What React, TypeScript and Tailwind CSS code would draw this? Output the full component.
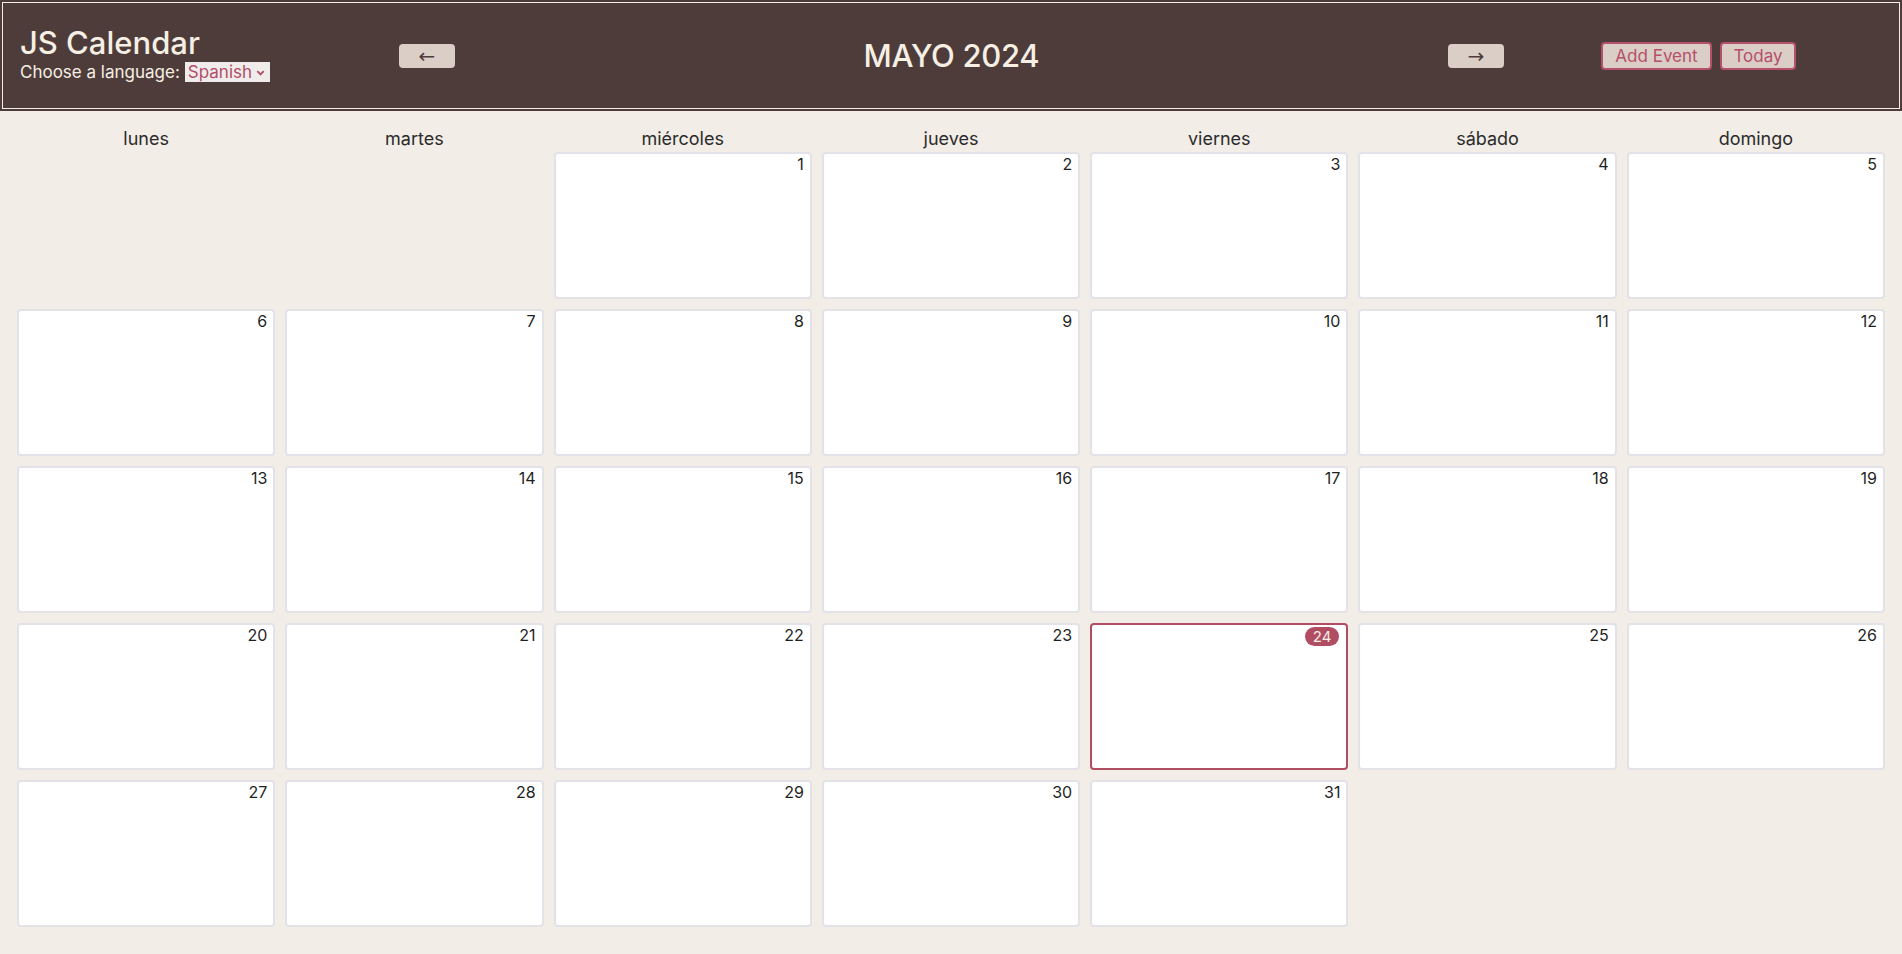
import { useState } from 'react';

const WEEKDAYS = ['lunes', 'martes', 'miércoles', 'jueves', 'viernes', 'sábado', 'domingo'];

// mayo 2024 starts on a wednesday (monday-first week)
const FIRST_OFFSET = 2;
const DAYS_IN_MONTH = 31;
const TODAY = 24;

function DayCell({ day }: { day: number | null }) {
    if (day === null) return <div />;
    const isToday = day === TODAY;
    return (
        <div
            className={
                isToday
                    ? 'h-[147px] bg-white border-2 border-[#b04d63] rounded flex justify-end items-start'
                    : 'h-[147px] bg-white border-2 border-[#e3e2e8] rounded flex justify-end items-start'
            }
        >
            {isToday ? (
                <span className="mt-[2px] mr-[7px] h-[19px] px-[8px] rounded-full bg-[#b04d63] text-[#f6efe4] text-[15px] leading-[19px]">
                    {day}
                </span>
            ) : (
                <span className="pr-[6px] text-[16px] leading-[20px] text-[#1f1f1f]">{day}</span>
            )}
        </div>
    );
}

export default function App() {
    const [language, setLanguage] = useState('Spanish');

    const cells: (number | null)[] = [];
    for (let i = 0; i < FIRST_OFFSET; i++) cells.push(null);
    for (let d = 1; d <= DAYS_IN_MONTH; d++) cells.push(d);

    return (
        <div className="min-h-[954px] bg-[#f2ede7] font-['Inter',sans-serif]">
            <header className="bg-[#4e3c3b] p-[2px]">
                <div className="h-[107px] border border-[#f2ede7] flex items-center pl-[17px] pr-[103px] text-[#f6efe4]">
                    <div className="w-[379px] flex flex-col pb-[3px]">
                        <h1 className="text-[31px] leading-[36px] font-medium">JS Calendar</h1>
                        <div className="flex items-center text-[17px] leading-[22px]">
                            <span className="mr-[5px]">Choose a language:</span>
                            <label className="h-[20px] bg-[#f0ecec] text-[#b14e69] flex items-center pl-[3px] pr-[4px]">
                                <select
                                    value={language}
                                    onChange={(e) => setLanguage(e.target.value)}
                                    className="appearance-none bg-transparent outline-none text-[17px] leading-[20px]"
                                >
                                    <option>English</option>
                                    <option>Spanish</option>
                                </select>
                                <svg width="11" height="11" viewBox="0 0 12 12" className="ml-[2px]">
                                    <path d="M2.5 4.5 L6 8 L9.5 4.5" fill="none" stroke="#b14e69" strokeWidth="2" />
                                </svg>
                            </label>
                        </div>
                    </div>
                    <button className="w-[56px] h-[24px] bg-[#dbcec7] rounded-sm text-[#4e3c3b] text-[20px] leading-[24px] font-['DejaVu_Sans',sans-serif]">
                        ←
                    </button>
                    <div className="flex-1 text-center text-[31px] leading-[38px] font-medium tracking-[-0.3px]">
                        MAYO 2024
                    </div>
                    <button className="w-[56px] h-[24px] bg-[#dbcec7] rounded-sm text-[#4e3c3b] text-[20px] leading-[24px] font-['DejaVu_Sans',sans-serif]">
                        →
                    </button>
                    <div className="ml-[97px] flex gap-[8px]">
                        <button className="w-[111px] h-[28px] bg-[#dbcec7] border-2 border-[#b5506a] rounded text-[#b5506a] text-[17px] leading-[24px]">
                            Add Event
                        </button>
                        <button className="w-[76px] h-[28px] bg-[#dbcec7] border-2 border-[#b5506a] rounded text-[#b5506a] text-[17px] leading-[24px]">
                            Today
                        </button>
                    </div>
                </div>
            </header>

            <main className="px-[17px] pt-[15px] pb-[20px]">
                <div className="grid grid-cols-7 gap-x-[10px] h-[26px] text-[18px] leading-[26px] text-[#2b2b2b]">
                    {WEEKDAYS.map((w) => (
                        <div key={w} className="text-center">
                            {w}
                        </div>
                    ))}
                </div>
                <div className="grid grid-cols-7 gap-[10px]">
                    {cells.map((d, i) => (
                        <DayCell key={i} day={d} />
                    ))}
                </div>
            </main>
        </div>
    );
}
